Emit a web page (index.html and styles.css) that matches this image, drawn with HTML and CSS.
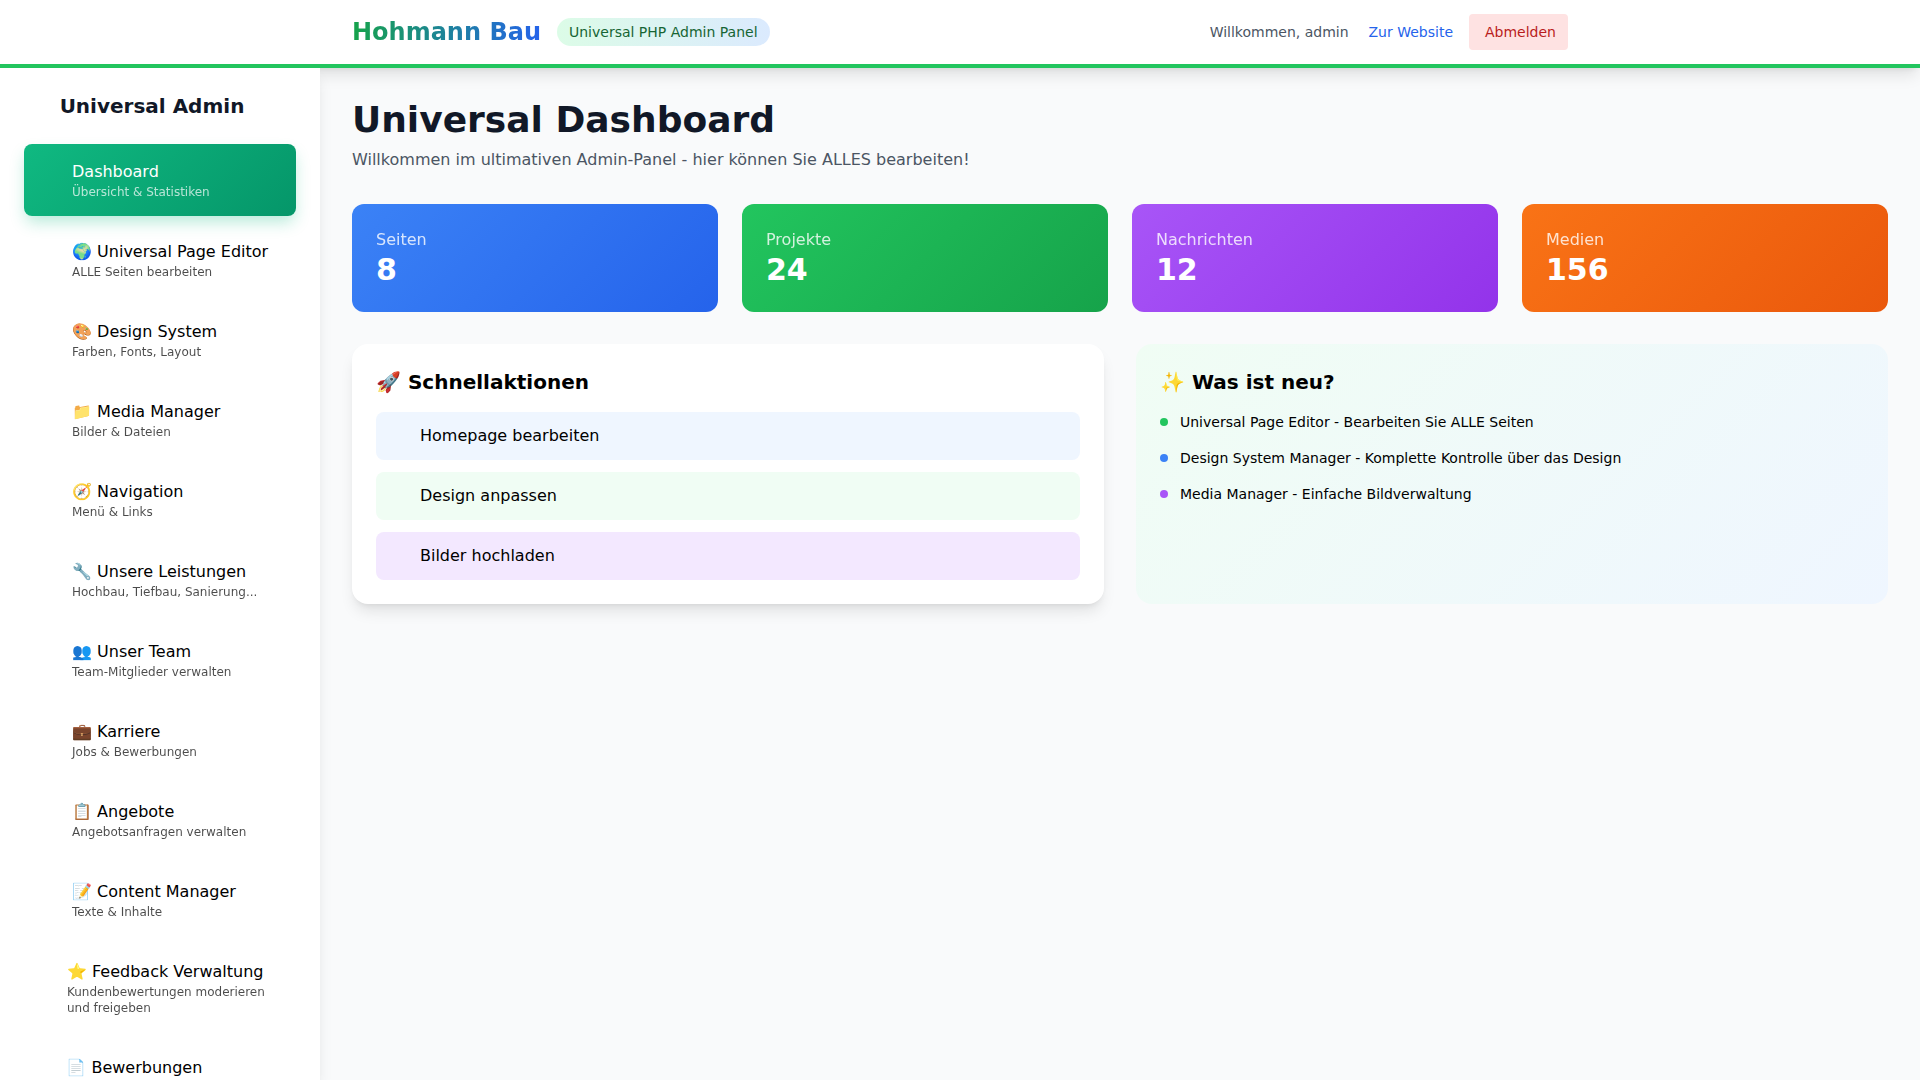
FILE: index.html
```html
<!DOCTYPE html>
<html lang="de">
<head>
    <meta charset="UTF-8">
    <meta name="viewport" content="width=device-width, initial-scale=1.0">
    <title>Universal Admin</title>
    <link rel="stylesheet" href="styles.css">
</head>
<body>
    <header class="topbar">
        <div class="topbar-inner">
            <div class="brand">
                <span class="logo">Hohmann Bau</span>
                <span class="badge">Universal PHP Admin Panel</span>
            </div>
            <div class="user-area">
                <span class="welcome">Willkommen, admin</span>
                <a class="site-link" href="#">Zur Website</a>
                <a class="logout" href="#">Abmelden</a>
            </div>
        </div>
    </header>

    <div class="layout">
        <aside class="sidebar">
            <h2 class="sidebar-title">Universal Admin</h2>
            <nav>
                <a class="nav-item active" href="#">
                    <span class="nav-icon"></span>
                    <span><span class="nav-name">Dashboard</span><span class="nav-sub">Übersicht &amp; Statistiken</span></span>
                </a>
                <a class="nav-item" href="#">
                    <span class="nav-icon"></span>
                    <span><span class="nav-name">🌍 Universal Page Editor</span><span class="nav-sub">ALLE Seiten bearbeiten</span></span>
                </a>
                <a class="nav-item" href="#">
                    <span class="nav-icon"></span>
                    <span><span class="nav-name">🎨 Design System</span><span class="nav-sub">Farben, Fonts, Layout</span></span>
                </a>
                <a class="nav-item" href="#">
                    <span class="nav-icon"></span>
                    <span><span class="nav-name">📁 Media Manager</span><span class="nav-sub">Bilder &amp; Dateien</span></span>
                </a>
                <a class="nav-item" href="#">
                    <span class="nav-icon"></span>
                    <span><span class="nav-name">🧭 Navigation</span><span class="nav-sub">Menü &amp; Links</span></span>
                </a>
                <a class="nav-item" href="#">
                    <span class="nav-icon"></span>
                    <span><span class="nav-name">🔧 Unsere Leistungen</span><span class="nav-sub">Hochbau, Tiefbau, Sanierung...</span></span>
                </a>
                <a class="nav-item" href="#">
                    <span class="nav-icon"></span>
                    <span><span class="nav-name">👥 Unser Team</span><span class="nav-sub">Team-Mitglieder verwalten</span></span>
                </a>
                <a class="nav-item" href="#">
                    <span class="nav-icon"></span>
                    <span><span class="nav-name">💼 Karriere</span><span class="nav-sub">Jobs &amp; Bewerbungen</span></span>
                </a>
                <a class="nav-item" href="#">
                    <span class="nav-icon"></span>
                    <span><span class="nav-name">📋 Angebote</span><span class="nav-sub">Angebotsanfragen verwalten</span></span>
                </a>
                <a class="nav-item" href="#">
                    <span class="nav-icon"></span>
                    <span><span class="nav-name">📝 Content Manager</span><span class="nav-sub">Texte &amp; Inhalte</span></span>
                </a>
                <a class="nav-item" href="#">
                    <span class="nav-icon"></span>
                    <span><span class="nav-name">⭐ Feedback Verwaltung</span><span class="nav-sub">Kundenbewertungen moderieren und freigeben</span></span>
                </a>
                <a class="nav-item" href="#">
                    <span class="nav-icon"></span>
                    <span><span class="nav-name">📄 Bewerbungen</span><span class="nav-sub">Eingegangene Bewerbungen ansehen und prüfen</span></span>
                </a>
            </nav>
        </aside>

        <main class="content">
            <h1 class="page-title">Universal Dashboard</h1>
            <p class="page-sub">Willkommen im ultimativen Admin-Panel - hier können Sie ALLES bearbeiten!</p>

            <section class="stats">
                <div class="stat stat-blue">
                    <div class="stat-label">Seiten</div>
                    <div class="stat-value">8</div>
                </div>
                <div class="stat stat-green">
                    <div class="stat-label">Projekte</div>
                    <div class="stat-value">24</div>
                </div>
                <div class="stat stat-purple">
                    <div class="stat-label">Nachrichten</div>
                    <div class="stat-value">12</div>
                </div>
                <div class="stat stat-orange">
                    <div class="stat-label">Medien</div>
                    <div class="stat-value">156</div>
                </div>
            </section>

            <section class="panels">
                <div class="panel panel-white">
                    <h3 class="panel-title">🚀 Schnellaktionen</h3>
                    <a class="action action-blue" href="#">Homepage bearbeiten</a>
                    <a class="action action-green" href="#">Design anpassen</a>
                    <a class="action action-purple" href="#">Bilder hochladen</a>
                </div>
                <div class="panel panel-tint">
                    <h3 class="panel-title">✨ Was ist neu?</h3>
                    <ul class="news">
                        <li><span class="dot dot-green"></span>Universal Page Editor - Bearbeiten Sie ALLE Seiten</li>
                        <li><span class="dot dot-blue"></span>Design System Manager - Komplette Kontrolle über das Design</li>
                        <li><span class="dot dot-purple"></span>Media Manager - Einfache Bildverwaltung</li>
                    </ul>
                </div>
            </section>
        </main>
    </div>
</body>
</html>
```

FILE: styles.css
```css
* {
    box-sizing: border-box;
}

body {
    margin: 0;
    height: 100vh;
    overflow: hidden;
    display: flex;
    flex-direction: column;
    font-family: "DejaVu Sans", sans-serif;
    font-size: 16px;
    line-height: 24px;
    color: #000;
    background-color: #f9fafb;
}

a {
    color: inherit;
    text-decoration: none;
}

/* Kopfzeile */
.topbar {
    flex: none;
    height: 68px;
    background-color: #fff;
    border-bottom: 4px solid #22c55e;
    box-shadow: 0 10px 15px -3px rgba(0, 0, 0, 0.1), 0 4px 6px -4px rgba(0, 0, 0, 0.1);
}

.topbar-inner {
    max-width: 1280px;
    height: 64px;
    margin: 0 auto;
    padding: 0 32px;
    display: flex;
    justify-content: space-between;
    align-items: center;
}

.brand {
    display: flex;
    align-items: center;
    gap: 16px;
}

.logo {
    font-size: 24px;
    line-height: 32px;
    font-weight: 700;
    background: linear-gradient(90deg, #16a34a, #2563eb);
    -webkit-background-clip: text;
    background-clip: text;
    color: transparent;
}

.badge {
    padding: 4px 12px;
    font-size: 14px;
    line-height: 20px;
    color: #166534;
    background: linear-gradient(90deg, #dcfce7, #dbeafe);
    border-radius: 9999px;
}

.user-area {
    display: flex;
    align-items: center;
    gap: 16px;
    font-size: 14px;
    line-height: 20px;
}

.welcome {
    margin-right: 4px;
    color: #4b5563;
}

.site-link {
    color: #2563eb;
}

.logout {
    padding: 8px 12px 8px 16px;
    color: #b91c1c;
    background-color: #fee2e2;
    border-radius: 4px;
}

/* Seitenleiste */
.layout {
    flex: 1;
    min-height: 0;
    display: flex;
}

.sidebar {
    position: relative; /* liegt ueber dem Schatten der Kopfzeile */
    flex: none;
    width: 320px;
    padding: 24px;
    overflow: hidden;
    background-color: #fff;
    box-shadow: 0 10px 15px -3px rgba(0, 0, 0, 0.1), 0 4px 6px -4px rgba(0, 0, 0, 0.1);
}

.sidebar-title {
    margin: 0 0 24px;
    padding-right: 16px;
    font-size: 20px;
    line-height: 28px;
    font-weight: 700;
    text-align: center;
    color: #111827;
}

.nav-item {
    display: flex;
    padding: 16px;
    margin-bottom: 8px;
    border-radius: 8px;
}

.nav-icon {
    width: 20px;
    margin-right: 12px;
}

.nav-name {
    display: block;
}

.nav-sub {
    display: block;
    font-size: 12px;
    line-height: 16px;
    opacity: 0.7;
}

.nav-item.active {
    color: #fff;
    background: linear-gradient(135deg, #10b981, #059669);
    box-shadow: 0 8px 16px -2px rgba(16, 185, 129, 0.3);
}

/* Inhalt */
.content {
    flex: 1;
    min-width: 0;
    padding: 32px;
}

.page-title {
    margin: 0 0 8px;
    font-size: 36px;
    line-height: 40px;
    font-weight: 700;
    color: #111827;
}

.page-sub {
    margin: 0 0 32px;
    color: #4b5563;
}

.stats {
    display: grid;
    grid-template-columns: repeat(4, 1fr);
    gap: 24px;
    margin-bottom: 32px;
}

.stat {
    padding: 24px;
    color: #fff;
    border-radius: 12px;
}

.stat-label {
    opacity: 0.8;
}

.stat-value {
    font-size: 30px;
    line-height: 36px;
    font-weight: 700;
}

.stat-blue {
    background: linear-gradient(135deg, #3b82f6, #2563eb);
}

.stat-green {
    background: linear-gradient(135deg, #22c55e, #16a34a);
}

.stat-purple {
    background: linear-gradient(135deg, #a855f7, #9333ea);
}

.stat-orange {
    background: linear-gradient(135deg, #f97316, #ea580c);
}

.panels {
    display: grid;
    grid-template-columns: repeat(2, 1fr);
    gap: 32px;
}

.panel {
    padding: 24px;
    border-radius: 16px;
}

.panel-white {
    background-color: #fff;
    box-shadow: 0 10px 15px -3px rgba(0, 0, 0, 0.1), 0 4px 6px -4px rgba(0, 0, 0, 0.1);
}

.panel-tint {
    background: linear-gradient(135deg, #f0fdf4, #eff6ff);
}

.panel-title {
    margin: 0 0 16px;
    font-size: 20px;
    line-height: 28px;
    font-weight: 700;
}

.action {
    display: block;
    padding: 12px 16px 12px 44px;
    margin-top: 12px;
    border-radius: 8px;
}

.panel-title + .action {
    margin-top: 0;
}

.action-blue {
    background-color: #eff6ff;
}

.action-green {
    background-color: #f0fdf4;
}

.action-purple {
    background-color: #f3e8ff;
}

.news {
    list-style: none;
    margin: 0;
    padding: 0;
    font-size: 14px;
    line-height: 20px;
}

.news li {
    display: flex;
    align-items: center;
    margin-bottom: 16px;
}

.dot {
    width: 8px;
    height: 8px;
    margin-right: 12px;
    border-radius: 50%;
}

.dot-green {
    background-color: #22c55e;
}

.dot-blue {
    background-color: #3b82f6;
}

.dot-purple {
    background-color: #a855f7;
}
```
